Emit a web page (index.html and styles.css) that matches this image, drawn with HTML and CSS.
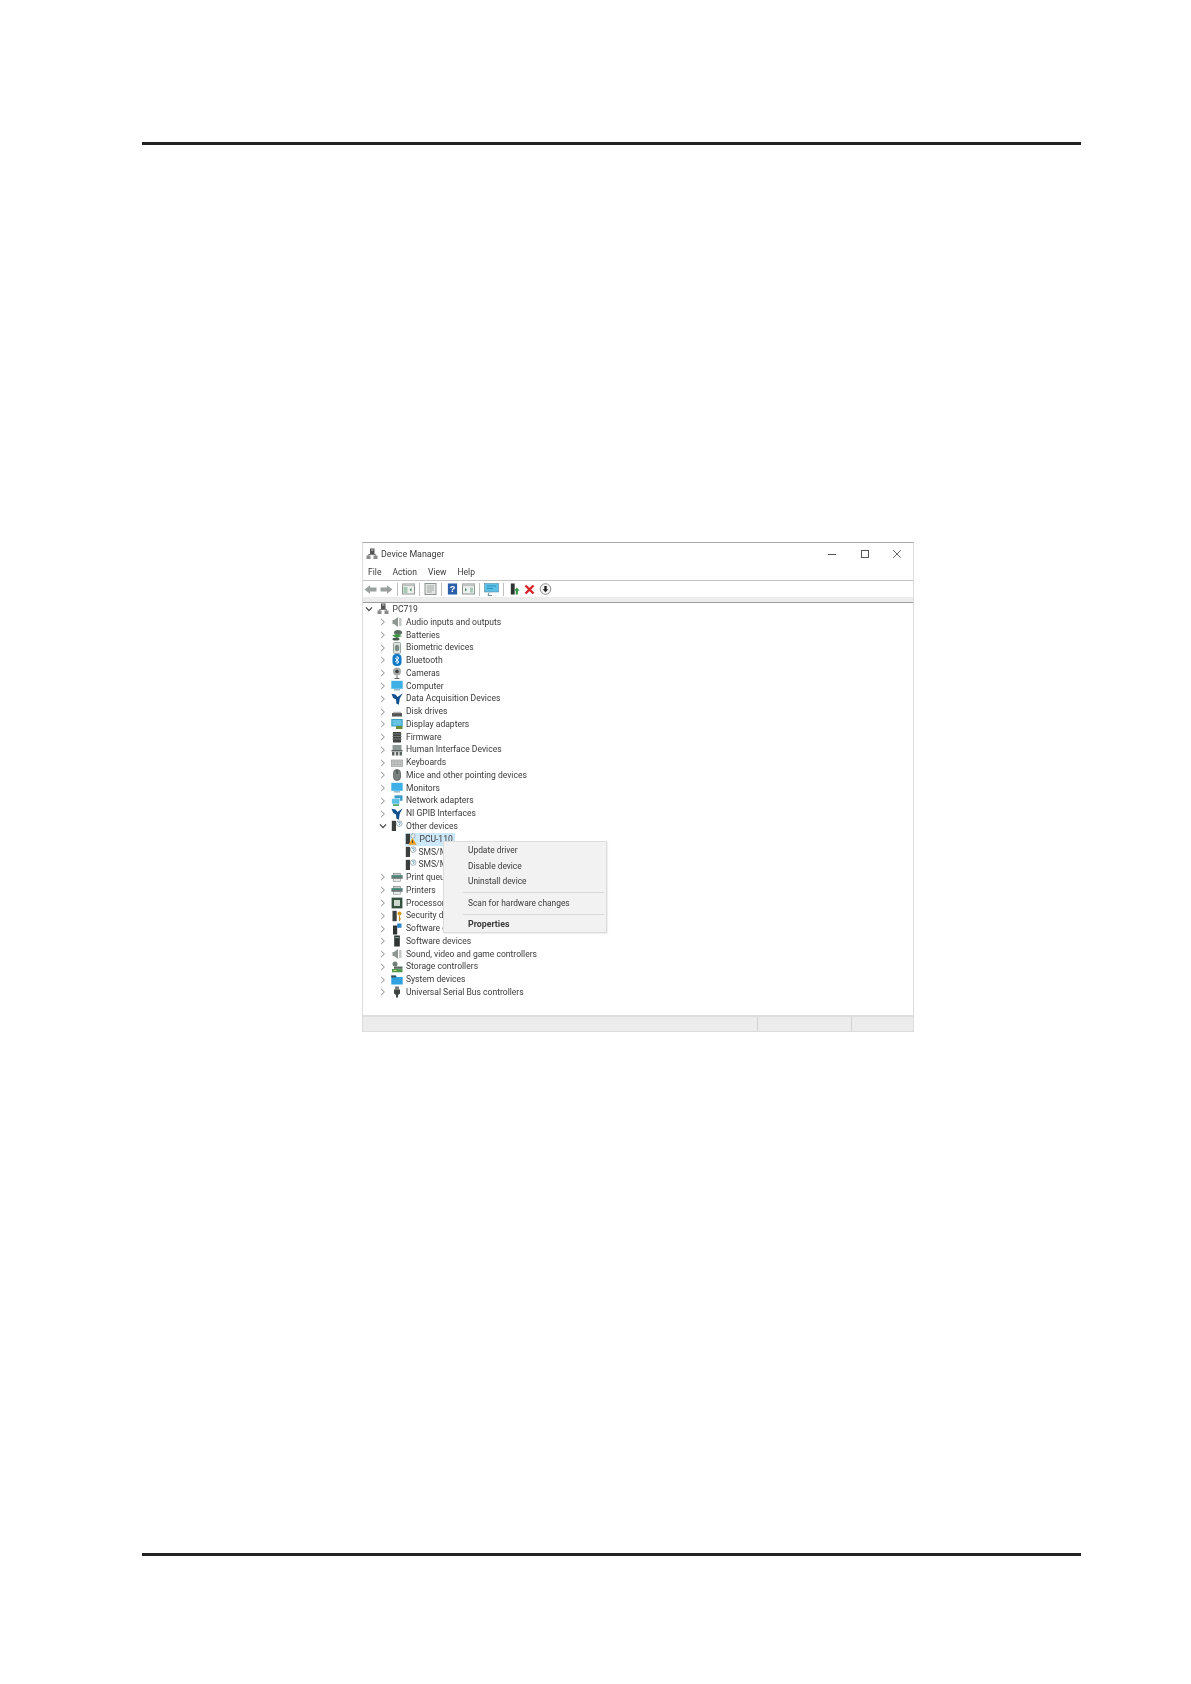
FILE: index.html
```html
<!DOCTYPE html>
<html lang="en">
<head>
<meta charset="utf-8">
<title>Device Manager</title>
<link rel="stylesheet" href="styles.css">
</head>
<body>
<svg class="defs" width="0" height="0" aria-hidden="true">
  <defs>
    <symbol id="chev-r" viewBox="0 0 8 8"><path d="M2.2 1 5.4 4 2.2 7" fill="none" stroke="#8a8a8a" stroke-width="1"/></symbol>
    <symbol id="chev-d" viewBox="0 0 8 8"><path d="M1 2.4 4 5.6 7 2.4" fill="none" stroke="#444" stroke-width="1.2"/></symbol>
    <symbol id="pc" viewBox="0 0 12 12"><rect x="4" y="0.5" width="4.5" height="6" fill="#555"/><rect x="5" y="1.5" width="2.5" height="1" fill="#ccc"/><rect x="0.5" y="7.5" width="4" height="3.5" fill="#8a8a8a"/><rect x="7.5" y="7.5" width="4" height="3.5" fill="#8a8a8a"/><path d="M2.5 7.5V6.5H9.5V7.5" fill="none" stroke="#777"/></symbol>
    <symbol id="audio" viewBox="0 0 12 12"><path d="M7 1 3 4H1.5V8H3L7 11Z" fill="#8e9692"/><rect x="8" y="2" width="2.5" height="8" fill="#c3c8c5"/></symbol>
    <symbol id="battery" viewBox="0 0 12 12"><ellipse cx="7" cy="3.5" rx="4" ry="2.5" fill="#5a6b60"/><path d="M1 6.5 6 5 11 7 6 9Z" fill="#3f9a45"/><ellipse cx="5" cy="10" rx="3.5" ry="1.6" fill="#47534b"/></symbol>
    <symbol id="bio" viewBox="0 0 12 12"><rect x="2.5" y="0.5" width="7" height="11" rx="1" fill="#dfe6e2" stroke="#9aa59f"/><ellipse cx="6" cy="6" rx="2.2" ry="3.2" fill="#7f8c85"/></symbol>
    <symbol id="bt" viewBox="0 0 12 12"><rect x="1.5" y="0" width="9" height="12" rx="4" fill="#1279c9"/><path d="M4 4 8 7.8 6 9.6V2.4L8 4.2 4 8" fill="none" stroke="#fff" stroke-width=".9"/></symbol>
    <symbol id="cam" viewBox="0 0 12 12"><circle cx="6" cy="4.5" r="4" fill="#a7aaa8"/><circle cx="6" cy="4.5" r="1.8" fill="#3c3f3d"/><path d="M6 8.5V11M3.5 11.5H8.5" stroke="#666" stroke-width="1"/></symbol>
    <symbol id="monitor" viewBox="0 0 12 12"><rect x="0.3" y="0.8" width="11.4" height="8" fill="#3fb0e6"/><rect x="3" y="9" width="6" height="1.6" fill="#9dbccb"/></symbol>
    <symbol id="ni" viewBox="0 0 12 12"><path d="M0.5 0.8 4.5 1.5 6.5 4 11.7 0.3 8.8 5.5 7.8 11.7 5.3 10.5 5 6.5 2.2 5Z" fill="#10508f"/></symbol>
    <symbol id="disk" viewBox="0 0 12 12"><rect x="1" y="7" width="10" height="3.5" fill="#555"/><rect x="2" y="5.8" width="8" height="1.4" fill="#b5b5b5"/></symbol>
    <symbol id="display" viewBox="0 0 12 12"><rect x="0.3" y="1" width="11.4" height="7.5" fill="#3a9fc4"/><rect x="1.5" y="2" width="9" height="5.5" fill="#66c3e4"/><rect x="5" y="8" width="6.5" height="3" fill="#6c8c3a"/></symbol>
    <symbol id="firm" viewBox="0 0 12 12"><rect x="2" y="1" width="8" height="10.5" fill="#3f4341"/><path d="M1 3H11M1 5.5H11M1 8H11" stroke="#8a8f8c" stroke-width=".7"/></symbol>
    <symbol id="hid" viewBox="0 0 12 12"><rect x="1.5" y="1" width="9" height="5" fill="#8c9895"/><rect x="0.5" y="6" width="11" height="1.5" fill="#59625f"/><rect x="1" y="8" width="2.5" height="3.5" fill="#59625f"/><rect x="4.8" y="8" width="2.5" height="3.5" fill="#59625f"/><rect x="8.5" y="8" width="2.5" height="3.5" fill="#59625f"/></symbol>
    <symbol id="kbd" viewBox="0 0 12 12"><rect x="0.3" y="3" width="11.4" height="6.5" fill="#c5c8c7" stroke="#8f9492" stroke-width=".6"/><path d="M1.5 5H10.5M1.5 7.4H10.5" stroke="#8d9290" stroke-width=".8" stroke-dasharray="1 .5"/></symbol>
    <symbol id="mouse" viewBox="0 0 12 12"><rect x="2.5" y="0.5" width="7" height="11" rx="3.5" fill="#7b8280" stroke="#4d5351" stroke-width=".7"/><path d="M6 1V5" stroke="#2f3332"/></symbol>
    <symbol id="net" viewBox="0 0 12 12"><rect x="3.5" y="0.3" width="8" height="5.5" fill="#3d9cc9"/><rect x="0.8" y="3.5" width="8" height="5.5" fill="#5cc0e6" stroke="#fff" stroke-width=".5"/><rect x="2" y="9.3" width="6" height="1.6" fill="#3fa05a"/></symbol>
    <symbol id="other" viewBox="0 0 12 12"><rect x="0.8" y="0.8" width="4.2" height="10.2" fill="#3a3f3d"/><circle cx="8.2" cy="3.6" r="2.8" fill="#fff" stroke="#7b8f99" stroke-width=".7"/><path d="M7.3 2.9a1 1 0 1 1 1.2 1.2V5" fill="none" stroke="#2f7fb5" stroke-width=".7"/></symbol>
    <symbol id="warn" viewBox="0 0 12 12"><rect x="0.8" y="0.8" width="4.2" height="10.2" fill="#3a3f3d"/><circle cx="8" cy="3" r="2.2" fill="#e8eef0" stroke="#7b8f99" stroke-width=".6"/><path d="M7.5 5 11.7 11.7H3.3Z" fill="#e8a020"/><path d="M7.5 7.3V9.8" stroke="#222" stroke-width=".8"/></symbol>
    <symbol id="printer" viewBox="0 0 12 12"><rect x="2.5" y="2.2" width="7" height="2" fill="#cfd4d2" stroke="#5f6664" stroke-width=".5"/><rect x="0.4" y="4.2" width="11.2" height="3.6" fill="#6a7573"/><rect x="0.8" y="4.6" width="10.4" height="1" fill="#2e9a80"/><rect x="2.5" y="7.8" width="7" height="2.4" fill="#eef0ef" stroke="#6a7573" stroke-width=".5"/></symbol>
    <symbol id="cpu" viewBox="0 0 12 12"><rect x="0.6" y="0.6" width="10.8" height="10.8" fill="#36513f"/><rect x="3" y="3" width="6" height="6" fill="#cdd6cf"/></symbol>
    <symbol id="sec" viewBox="0 0 12 12"><rect x="1.5" y="0.8" width="4.2" height="10.4" fill="#3a3f3d"/><circle cx="8.5" cy="3.6" r="2" fill="#d99a20"/><path d="M8.5 5.5V11M8.5 9H10.2" stroke="#c28a1c" stroke-width="1"/></symbol>
    <symbol id="swc" viewBox="0 0 12 12"><rect x="2" y="2.5" width="4.2" height="9" fill="#2f3533"/><rect x="6.2" y="0.5" width="4.3" height="4.3" fill="#2f83c9"/></symbol>
    <symbol id="swd" viewBox="0 0 12 12"><rect x="3.2" y="0.5" width="5.6" height="11" fill="#2f3533"/><rect x="4.2" y="2" width="3.6" height="1.2" fill="#7ea39c"/></symbol>
    <symbol id="storage" viewBox="0 0 12 12"><circle cx="4" cy="3" r="2.5" fill="#6f7d76"/><rect x="3" y="5.5" width="8.5" height="2.3" fill="#5c6a63"/><rect x="1" y="8" width="10.5" height="3.3" fill="#4f9a52"/><rect x="2.5" y="9" width="3" height="1" fill="#d6dd70"/></symbol>
    <symbol id="system" viewBox="0 0 12 12"><path d="M0.3 1.5H5L6 3H11.7V10.5H0.3Z" fill="#2fa2df"/><rect x="0.3" y="1.5" width="4.5" height="2" fill="#3f4a4d"/></symbol>
    <symbol id="usb" viewBox="0 0 12 12"><rect x="4" y="0.5" width="4" height="3" fill="#767c7a"/><path d="M3 3.5H9V7.5L7 9V11.5H5V9L3 7.5Z" fill="#3f4442"/></symbol>
  </defs>
</svg>

<main class="page">
  <div class="rule rule-top"></div>

  <figure class="figure">
    <section class="window">
      <header class="titlebar">
        <svg class="ico-title"><use href="#pc"/></svg>
        <span class="title">Device Manager</span>
        <div class="controls">
          <svg class="ctl" viewBox="0 0 10 10"><path d="M1 5.5H9" stroke="#555" stroke-width="1"/></svg>
          <svg class="ctl" viewBox="0 0 10 10"><rect x="1.5" y="1.5" width="7" height="7" fill="none" stroke="#555" stroke-width="1"/></svg>
          <svg class="ctl" viewBox="0 0 10 10"><path d="M1.2 1.2 8.8 8.8M8.8 1.2 1.2 8.8" stroke="#555" stroke-width=".9"/></svg>
        </div>
      </header>

      <nav class="menubar">
        <span>File</span><span>Action</span><span>View</span><span>Help</span>
      </nav>

      <div class="toolbar">
        <svg class="tb arrow" viewBox="0 0 13 10"><path d="M0.5 5 6 0.8V3H12.5V7H6V9.2Z" fill="#9aa09d"/></svg>
        <svg class="tb arrow" viewBox="0 0 13 10"><path d="M12.5 5 7 0.8V3H0.5V7H7V9.2Z" fill="#9aa09d"/></svg>
        <i class="tsep"></i>
        <svg class="tb" viewBox="0 0 13 11"><rect x=".5" y=".5" width="12" height="10" fill="#eef1ef" stroke="#8d9491"/><rect x=".5" y=".5" width="12" height="2.2" fill="#bfc6c2"/><rect x="1.5" y="3.5" width="4" height="6" fill="#a9c9b6"/><path d="M9.5 4.5 7.5 6.3 9.5 8" fill="#3f8a58"/></svg>
        <i class="tsep"></i>
        <svg class="tb" viewBox="0 0 13 12"><rect x="1" y=".5" width="11" height="11" fill="#e3e6e4" stroke="#8d9491"/><path d="M3 3H10M3 5H10M3 7H10M3 9H8" stroke="#a4aaa7"/></svg>
        <i class="tsep"></i>
        <svg class="tb" viewBox="0 0 11 13"><rect x=".5" y=".5" width="10" height="12" fill="#2b5fa8"/><text class="qmark" x="5.5" y="10">?</text></svg>
        <svg class="tb" viewBox="0 0 13 11"><rect x=".5" y=".5" width="12" height="10" fill="#eef1ef" stroke="#8d9491"/><rect x=".5" y=".5" width="12" height="2.2" fill="#bfc6c2"/><path d="M3 4.5 5 6.3 3 8" fill="#3f8a58"/><rect x="8" y="4" width="3" height="5" fill="#a9c9b6"/></svg>
        <i class="tsep"></i>
        <svg class="tb wide" viewBox="0 0 15 13"><rect x=".5" y=".5" width="14" height="8.5" fill="#5cc0e6" stroke="#5a8aa0" stroke-width=".6"/><path d="M3 3H12M3 5.5H9" stroke="#2f8fb8"/><path d="M5 9.5 4 12.5H8" fill="none" stroke="#6f8f9a"/></svg>
        <i class="tsep"></i>
        <svg class="tb" viewBox="0 0 11 13"><rect x="1.5" y=".5" width="4.2" height="12" fill="#2f3533"/><path d="M8 5 11 8.5H9.2V12.5H6.8V8.5H5Z" fill="#2f9a4a"/></svg>
        <svg class="tb x" viewBox="0 0 11 11"><path d="M1.5 1.5 9.5 9.5M9.5 1.5 1.5 9.5" stroke="#d8232a" stroke-width="2.4"/></svg>
        <svg class="tb end" viewBox="0 0 12 12"><circle cx="6" cy="6" r="5.3" fill="#f4f4f4" stroke="#777" stroke-width=".8"/><path d="M6 9.3 3.2 6.2H4.8V3H7.2V6.2H8.8Z" fill="#222"/></svg>
      </div>
      <div class="strip"></div>

      <div class="tree">
        <div class="row root"><svg class="chev"><use href="#chev-d"/></svg><svg class="ico"><use href="#pc"/></svg><span>PC719</span></div>
        <div class="row"><svg class="chev"><use href="#chev-r"/></svg><svg class="ico"><use href="#audio"/></svg><span>Audio inputs and outputs</span></div>
        <div class="row"><svg class="chev"><use href="#chev-r"/></svg><svg class="ico"><use href="#battery"/></svg><span>Batteries</span></div>
        <div class="row"><svg class="chev"><use href="#chev-r"/></svg><svg class="ico"><use href="#bio"/></svg><span>Biometric devices</span></div>
        <div class="row"><svg class="chev"><use href="#chev-r"/></svg><svg class="ico"><use href="#bt"/></svg><span>Bluetooth</span></div>
        <div class="row"><svg class="chev"><use href="#chev-r"/></svg><svg class="ico"><use href="#cam"/></svg><span>Cameras</span></div>
        <div class="row"><svg class="chev"><use href="#chev-r"/></svg><svg class="ico"><use href="#monitor"/></svg><span>Computer</span></div>
        <div class="row"><svg class="chev"><use href="#chev-r"/></svg><svg class="ico"><use href="#ni"/></svg><span>Data Acquisition Devices</span></div>
        <div class="row"><svg class="chev"><use href="#chev-r"/></svg><svg class="ico"><use href="#disk"/></svg><span>Disk drives</span></div>
        <div class="row"><svg class="chev"><use href="#chev-r"/></svg><svg class="ico"><use href="#display"/></svg><span>Display adapters</span></div>
        <div class="row"><svg class="chev"><use href="#chev-r"/></svg><svg class="ico"><use href="#firm"/></svg><span>Firmware</span></div>
        <div class="row"><svg class="chev"><use href="#chev-r"/></svg><svg class="ico"><use href="#hid"/></svg><span>Human Interface Devices</span></div>
        <div class="row"><svg class="chev"><use href="#chev-r"/></svg><svg class="ico"><use href="#kbd"/></svg><span>Keyboards</span></div>
        <div class="row"><svg class="chev"><use href="#chev-r"/></svg><svg class="ico"><use href="#mouse"/></svg><span>Mice and other pointing devices</span></div>
        <div class="row"><svg class="chev"><use href="#chev-r"/></svg><svg class="ico"><use href="#monitor"/></svg><span>Monitors</span></div>
        <div class="row"><svg class="chev"><use href="#chev-r"/></svg><svg class="ico"><use href="#net"/></svg><span>Network adapters</span></div>
        <div class="row"><svg class="chev"><use href="#chev-r"/></svg><svg class="ico"><use href="#ni"/></svg><span>NI GPIB Interfaces</span></div>
        <div class="row"><svg class="chev"><use href="#chev-d"/></svg><svg class="ico"><use href="#other"/></svg><span>Other devices</span></div>
        <div class="row child"><div class="selected"><svg class="ico"><use href="#warn"/></svg><span>PCU-110</span></div></div>
        <div class="row child"><svg class="ico"><use href="#other"/></svg><span>SMS/MMS</span></div>
        <div class="row child"><svg class="ico"><use href="#other"/></svg><span>SMS/MMS</span></div>
        <div class="row"><svg class="chev"><use href="#chev-r"/></svg><svg class="ico"><use href="#printer"/></svg><span>Print queues</span></div>
        <div class="row"><svg class="chev"><use href="#chev-r"/></svg><svg class="ico"><use href="#printer"/></svg><span>Printers</span></div>
        <div class="row"><svg class="chev"><use href="#chev-r"/></svg><svg class="ico"><use href="#cpu"/></svg><span>Processors</span></div>
        <div class="row"><svg class="chev"><use href="#chev-r"/></svg><svg class="ico"><use href="#sec"/></svg><span>Security devices</span></div>
        <div class="row"><svg class="chev"><use href="#chev-r"/></svg><svg class="ico"><use href="#swc"/></svg><span>Software components</span></div>
        <div class="row"><svg class="chev"><use href="#chev-r"/></svg><svg class="ico"><use href="#swd"/></svg><span>Software devices</span></div>
        <div class="row"><svg class="chev"><use href="#chev-r"/></svg><svg class="ico"><use href="#audio"/></svg><span>Sound, video and game controllers</span></div>
        <div class="row"><svg class="chev"><use href="#chev-r"/></svg><svg class="ico"><use href="#storage"/></svg><span>Storage controllers</span></div>
        <div class="row"><svg class="chev"><use href="#chev-r"/></svg><svg class="ico"><use href="#system"/></svg><span>System devices</span></div>
        <div class="row"><svg class="chev"><use href="#chev-r"/></svg><svg class="ico"><use href="#usb"/></svg><span>Universal Serial Bus controllers</span></div>
      </div>

      <footer class="statusbar">
        <div class="cell cell-main"></div>
        <div class="cell cell-mid"></div>
        <div class="cell cell-end"></div>
      </footer>

      <ul class="context">
        <li>Update driver</li>
        <li>Disable device</li>
        <li>Uninstall device</li>
        <li class="msep"></li>
        <li>Scan for hardware changes</li>
        <li class="msep"></li>
        <li class="strong">Properties</li>
      </ul>
    </section>
  </figure>

  <div class="rule rule-bottom"></div>
</main>
</body>
</html>
```

FILE: styles.css
```css
html, body {
  margin: 0;
  padding: 0;
  background: #fff;
}
.defs {
  position: absolute;
}
.page {
  height: 1684px;
  padding: 142px 110px 0 142px;
  box-sizing: border-box;
  font-family: Roboto, "Liberation Sans", sans-serif;
}
.rule {
  height: 3px;
  width: 939px;
  background: #222;
}
.figure {
  margin: 397px 0 0 220px;
  width: 552px;
}
.rule-bottom {
  margin-top: 521px;
}
.window {
  position: relative;
  height: 490px;
  box-sizing: border-box;
  border-top: 1px solid #a8a8a8;
  border-left: 1px solid #dcdcdc;
  border-right: 1px solid #dcdcdc;
  display: flex;
  flex-direction: column;
  font-size: 8.55px;
  color: #3a3a3a;
  background: #fff;
  filter: blur(.35px);
}
.titlebar {
  height: 22px;
  flex: none;
  display: flex;
  align-items: center;
  padding: 0 0 1px 3px;
  box-sizing: border-box;
  font-size: 8.85px;
}
.ico-title {
  width: 12px;
  height: 12px;
  margin-right: 3px;
}
.controls {
  margin-left: auto;
  display: flex;
  gap: 22.5px;
  padding-right: 11px;
}
.ctl {
  width: 10px;
  height: 10px;
}
.menubar {
  height: 16px;
  flex: none;
  box-sizing: border-box;
  display: flex;
  align-items: center;
  gap: 11px;
  padding: 0 0 2px 5px;
  border-bottom: 1px solid #c4c4c4;
}
.toolbar {
  height: 16px;
  flex: none;
  display: flex;
  align-items: center;
  gap: 3px;
  padding-left: 1px;
}
.tb {
  width: 13px;
  height: 12px;
  flex: none;
}
.tb.arrow {
  height: 11px;
}
.tb.wide {
  width: 15px;
  height: 13px;
}
.tb.x {
  width: 11px;
  height: 11px;
}
.tb.end {
  margin-left: 1px;
}
.tsep {
  width: 1px;
  height: 13px;
  background: #c0c0c0;
  margin: 0 1px;
}
.qmark {
  font: 700 10px "Liberation Sans", sans-serif;
  fill: #fff;
  text-anchor: middle;
}
.strip {
  height: 5px;
  flex: none;
  background: #ececec;
  border-bottom: 1px solid #9c9c9c;
}
.tree {
  flex: 1;
  min-height: 0;
}
.row {
  height: 12.78px;
  line-height: 12.78px;
  display: flex;
  align-items: center;
  padding-left: 15.5px;
  white-space: nowrap;
}
.row.root {
  padding-left: 2px;
}
.row.child {
  padding-left: 41.5px;
}
.chev {
  width: 8px;
  height: 8px;
  flex: none;
  margin-right: 4px;
}
.ico {
  width: 12px;
  height: 12px;
  flex: none;
  margin-right: 3.5px;
}
.row.child .ico {
  margin-right: 2px;
}
.selected {
  display: flex;
  align-items: center;
  background: #cde8f8;
  padding-right: 2px;
}
.row.child .selected .ico {
  margin-right: 3px;
}
.statusbar {
  height: 17px;
  flex: none;
  display: flex;
  background: #ececec;
  border-top: 2px solid #dedede;
  border-bottom: 1px solid #dcdcdc;
  box-sizing: border-box;
}
.cell {
  height: 100%;
  border-right: 1px solid #d2d2d2;
}
.cell-main {
  width: 394px;
}
.cell-mid {
  width: 93px;
}
.cell-end {
  flex: 1;
  border-right: 0;
}
.context {
  position: absolute;
  left: 80px;
  top: 298px;
  width: 164px;
  height: 92px;
  box-sizing: border-box;
  margin: 0;
  padding: 1px 2px 0 24px;
  list-style: none;
  font-size: 8.4px;
  background: #f2f2f2;
  border: 1px solid #dcdcdc;
  box-shadow: 1px 1px 1px rgba(0, 0, 0, .06);
}
.context li {
  height: 15.5px;
  line-height: 15.5px;
  white-space: nowrap;
}
.context .msep {
  height: 1px;
  background: #d8d8d8;
  margin: 2.5px 0 2.5px -5px;
}
.context .strong {
  font-size: 8.8px;
  font-weight: 700;
}
```
